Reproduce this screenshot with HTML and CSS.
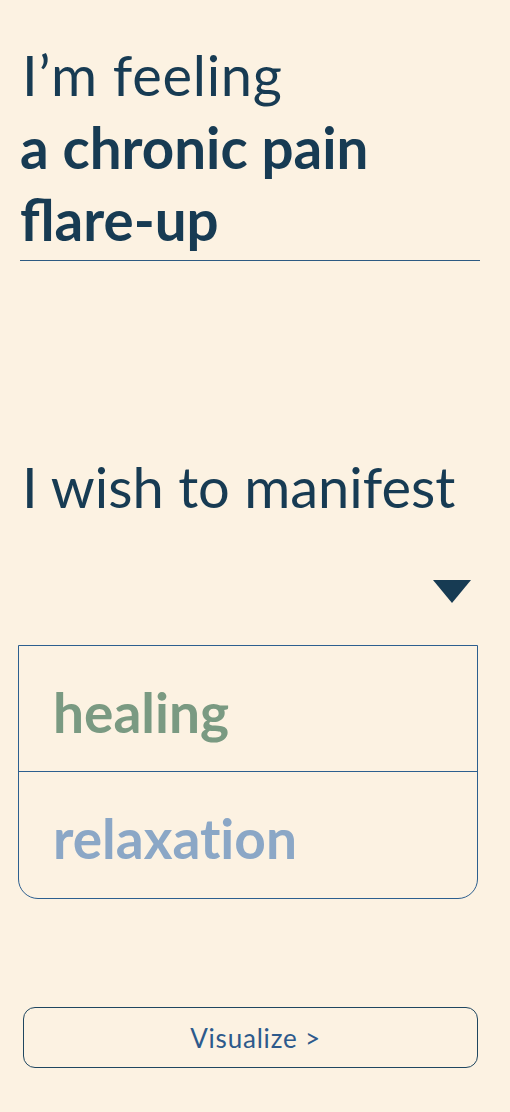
FILE: index.html
```html
<!DOCTYPE html>
<html lang="en">
<head>
<meta charset="utf-8">
<title>Manifest</title>
<link rel="stylesheet" href="styles.css">
</head>
<body>
<main class="page">
  <section class="feeling">
    <p class="feeling-label">I’m feeling</p>
    <p class="feeling-value">a chronic pain<br>flare-up</p>
  </section>
  <section class="manifest">
    <p class="manifest-label">I wish to manifest</p>
    <div class="caret-row">
      <svg class="caret" width="38" height="23" viewBox="0 0 38 23"><polygon points="0,0 38,0 19,23" fill="#173b53"/></svg>
    </div>
    <ul class="options">
      <li class="option option-healing">healing</li>
      <li class="option option-relax">relaxation</li>
    </ul>
  </section>
  <div class="action">
    <button class="visualize">Visualize &gt;</button>
  </div>
</main>
</body>
</html>
```
FILE: styles.css
```css
html, body {
  margin: 0;
  padding: 0;
  background: #fcf2e2;
}
body {
  font-family: Lato, "Open Sans", sans-serif;
  color: #173b53;
}
.page {
  width: 510px;
  height: 1112px;
  display: flex;
  flex-direction: column;
}
p { margin: 0; }
.feeling {
  margin: 39px 30px 0 20px;
  border-bottom: 1px solid #2d5a82;
  padding-bottom: 5px;
}
.feeling-label {
  font-size: 56px;
  font-weight: 400;
  line-height: 72px;
  letter-spacing: 0.7px;
  padding-left: 2px;
}
.feeling-value {
  font-size: 56.5px;
  font-weight: 700;
  line-height: 72px;
}
.manifest {
  margin-top: 196px;
  display: flex;
  flex-direction: column;
}
.manifest-label {
  margin-left: 22px;
  font-size: 56px;
  font-weight: 400;
  line-height: 60px;
}
.caret-row {
  display: flex;
  justify-content: flex-end;
  padding-right: 39px;
  margin-top: 63px;
}
.caret { display: block; }
.options {
  list-style: none;
  margin: 42px 32px 0 18px;
  padding: 0;
  border: 1px solid #2d5f8f;
  border-radius: 0 0 20px 20px;
}
.option {
  height: 126px;
  box-sizing: border-box;
  padding-top: 6px;
  display: flex;
  align-items: center;
  padding-left: 34px;
  font-size: 55px;
  font-weight: 700;
  font-variant-ligatures: none;
}
.option-healing {
  color: #7a9a82;
  border-bottom: 1px solid #2d5f8f;
}
.option-relax { color: #8ba7c6; }
.action {
  margin: 108px 32px 0 23px;
}
.visualize {
  width: 100%;
  height: 61px;
  padding: 0 0 0 10px;
  background: transparent;
  border: 1px solid #1f4660;
  border-radius: 12px;
  font-family: Lato, sans-serif;
  font-size: 26px;
  letter-spacing: 0.8px;
  font-weight: 400;
  color: #2d5a8c;
}
```
